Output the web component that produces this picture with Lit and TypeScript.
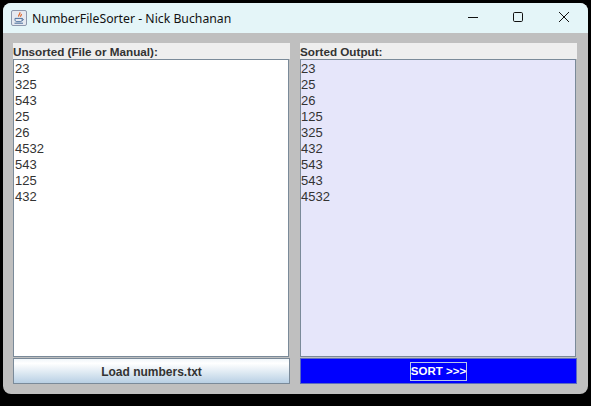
import { LitElement, html, css } from "lit";
import { customElement } from "lit/decorators.js";

const UNSORTED = ["23", "325", "543", "25", "26", "4532", "543", "125", "432"];
const SORTED = ["23", "25", "26", "125", "325", "432", "543", "543", "4532"];

@customElement("app-root")
export class AppRoot extends LitElement {
  static styles = css`
    :host { display: block; width: 591px; height: 406px; background: #000; overflow: hidden; box-sizing: border-box; padding: 3px 3px 12px 3px; }
    .win { height: 391px; border-radius: 8px; overflow: hidden; background: #bfbfbf; display: flex; flex-direction: column; }
    .title { height: 30px; flex: none; background: #e4f5f8; display: flex; align-items: center; padding: 0 1px 0 8px; color: #111; }
    .icon { width: 16px; height: 16px; margin: -1px 5px 0 0; flex: none; }
    .name { flex: 1; font: 12.25px "Noto Sans", sans-serif; }
    .ctl { width: 46px; height: 30px; display: flex; align-items: center; justify-content: center; box-sizing: border-box; padding-bottom: 2px; }
    .ctl.min { width: 45px; }
    .ctl svg { width: 12px; height: 12px; }
    .content { flex: 1; display: grid; grid-template-columns: 277px 277px; column-gap: 10px; padding: 10px 11px 10px 10px; min-height: 0; }
    .col { display: flex; flex-direction: column; min-height: 0; }
    .label { height: 16px; flex: none; background: #eeeeee; font: bold 11.7px/18px "Liberation Sans", Arial, sans-serif; color: #333; }
    .area { flex: 1; margin-right: 1px; border: 1px solid #7a8a99; padding: 1px 0 0 1px; font: 13px/16px "Liberation Sans", Arial, sans-serif; color: #333; min-height: 0; }
    .area.in { background: #fff; }
    .area.out { background: #e6e6fa; padding-left: 0; }
    .area div { height: 16px; }
    .btn { height: 26px; flex: none; margin-top: 1px; box-sizing: border-box; border: 1px solid #7a8a99; display: flex; align-items: center; justify-content: center; font: bold 12px "Liberation Sans", Arial, sans-serif; color: #333; }
    .btn.load { background: linear-gradient(#f0f6fa, #ffffff 18%, #dfeaf3 55%, #b8cfe4); padding-top: 1px; }
    .btn.sort { background: #0000ff; color: #fff; border-color: #5c6bc0; font-size: 11.5px; }
    .focus { border: 1px solid #b8c6e8; padding: 1px 0; line-height: 15px; }
  `;

  render() {
    return html`
      <div class="win">
        <div class="title">
          <svg class="icon" viewBox="0 0 16 16">
            <rect x="0.5" y="0.5" width="15" height="15" rx="1.5" fill="#e6e9f0" stroke="#8d98ad"/>
            <path d="M8.8 2.2c1 1.6-2 2.6-1 4.4M10.4 4c.4 1-1.2 1.6-.8 2.8" fill="none" stroke="#e0672a" stroke-width="1.2"/>
            <path d="M4 8.4h7.2v1.2c0 1.5-1 2.1-2 2.1H6c-1 0-2-.6-2-2.1zM11.2 8.8c1.4-.2 1.6 1.5 0 1.8" fill="none" stroke="#4a6f9c" stroke-width="1"/>
            <path d="M3.5 13.2h8.5" stroke="#4a6f9c" stroke-width="1"/>
          </svg>
          <span class="name">NumberFileSorter - Nick Buchanan</span>
          <div class="ctl min"><svg viewBox="0 0 12 12"><path d="M1 6.5h10" stroke="#111" stroke-width="1"/></svg></div>
          <div class="ctl"><svg viewBox="0 0 12 12"><rect x="1.5" y="1.5" width="9" height="9" rx="1.2" fill="none" stroke="#111" stroke-width="1"/></svg></div>
          <div class="ctl"><svg viewBox="0 0 12 12"><path d="M1 1l10 10M11 1L1 11" stroke="#111" stroke-width="1" fill="none"/></svg></div>
        </div>
        <div class="content">
          <div class="col">
            <div class="label">Unsorted (File or Manual):</div>
            <div class="area in">${UNSORTED.map((n) => html`<div>${n}</div>`)}</div>
            <div class="btn load">Load numbers.txt</div>
          </div>
          <div class="col">
            <div class="label">Sorted Output:</div>
            <div class="area out">${SORTED.map((n) => html`<div>${n}</div>`)}</div>
            <div class="btn sort"><span class="focus">SORT &gt;&gt;&gt;</span></div>
          </div>
        </div>
      </div>
    `;
  }
}
